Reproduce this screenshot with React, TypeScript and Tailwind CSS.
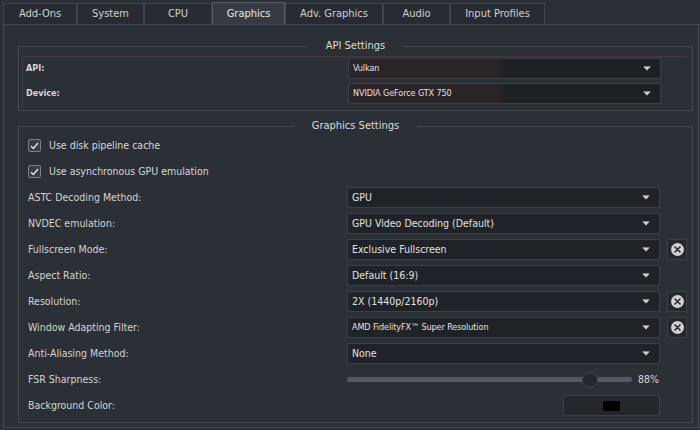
import React from "react";

const tabs = [
  { name: "Add-Ons", w: "w-[74px]" },
  { name: "System", w: "w-[67px]" },
  { name: "CPU", w: "w-[68px]" },
  { name: "Graphics", w: "w-[73px]", active: true },
  { name: "Adv. Graphics", w: "w-[98px]" },
  { name: "Audio", w: "w-[67px]" },
  { name: "Input Profiles", w: "w-[95px]" },
];

function Arrow() {
  return (
    <svg width="8" height="5" viewBox="0 0 8 5" className="shrink-0">
      <path d="M0.8 0.8 L7.2 0.8 L4 4.2 Z" fill="#d0d0d0" stroke="#d0d0d0" strokeWidth="0.6" strokeLinejoin="round" />
    </svg>
  );
}

function Combo({ value, small, tinted }: { value: string; small?: boolean; tinted?: boolean }) {
  return (
    <div
      className={
        "w-[313px] h-[21px] flex items-center justify-between pl-[4px] pr-[9px] border border-[#3b4047] " +
        (tinted
          ? "bg-[linear-gradient(to_right,#2b2428_0%,#2a2428_48%,#1e2124_50%,#1e2124_100%)]"
          : "bg-[#1f2226]")
      }
    >
      <span
        className={
          "text-[#e2e2e2] whitespace-nowrap " + (small ? "text-[9px] tracking-[-0.1px]" : "text-[10.5px]")
        }
      >
        {value}
      </span>
      <Arrow />
    </div>
  );
}

function ClearBtn() {
  return (
    <div className="w-[20px] h-[21px] ml-[7px] flex items-center justify-center bg-[#24272b] border border-[#3b3f46]">
      <div className="w-[13px] h-[13px] rounded-full bg-[#d2d2d2] flex items-center justify-center">
        <svg width="7" height="7" viewBox="0 0 7 7">
          <path d="M1 1 L6 6 M6 1 L1 6" stroke="#2a2d31" strokeWidth="1.7" strokeLinecap="round" />
        </svg>
      </div>
    </div>
  );
}

function Row({ label, children }: { label: string; children: React.ReactNode }) {
  return (
    <div className="flex items-center h-[21px]">
      <div className="w-[319px] text-[10.5px] text-[#d4d4d4] whitespace-nowrap">{label}</div>
      {children}
    </div>
  );
}

function Check({ label }: { label: string }) {
  return (
    <div className="flex items-center h-[21px]">
      <div className="w-[13px] h-[13px] rounded-[2px] border border-[#7c8087] bg-[#3a3e45] flex items-center justify-center">
        <svg width="9" height="8" viewBox="0 0 9 8">
          <path d="M1 4.2 L3.4 6.5 L8 1" stroke="#e4e4e4" strokeWidth="1.4" fill="none" />
        </svg>
      </div>
      <span className="ml-[8px] text-[10.5px] text-[#d8d8d8] whitespace-nowrap">{label}</span>
    </div>
  );
}

function Group({ title, children, className }: { title: string; children: React.ReactNode; className?: string }) {
  return (
    <div className={"relative w-[675px] border border-[#454a52] " + (className ?? "")}>
      <div className="absolute -top-[8px] left-0 right-0 flex justify-center">
        <span className="bg-[#2b2f36] px-[18px] text-[11px] leading-[14px] text-[#dcdcdc]">{title}</span>
      </div>
      {children}
    </div>
  );
}

export default function App() {
  return (
    <div className="w-[700px] h-[430px] overflow-hidden bg-[#2b2f36] font-['DejaVu_Sans_Condensed','DejaVu_Sans',sans-serif] text-[#d6d6d6]">
      {/* Tabs */}
      <div className="flex pl-[3px] pt-[3px] h-[24px] items-end">
        {tabs.map((t) => (
          <div
            key={t.name}
            className={
              "flex items-center justify-center pt-px text-[11px] border-l border-r border-t " +
              t.w +
              " " +
              (t.active
                ? "bg-[#363b43] border-[#565b63] text-[#e6e6e6] h-[22px]"
                : "bg-[#282b31] border-[#40454c] text-[#d0d0d0] h-[21px]")
            }
          >
            {t.name}
          </div>
        ))}
      </div>
      {/* Frame */}
      <div className="ml-[3px] w-[696px] h-[404px] border border-[#454a52] pl-[14px] bg-[#2b2f36]">
        <Group title="API Settings" className="mt-[21px] pl-[3px] pt-[9px] pb-[3px] h-[65px]">
          <div className="w-[665px] border-l border-t border-[#453a40] pl-[3px] pt-px flex flex-col gap-[4px] h-[50px]">
            <div className="flex items-center h-[21px]">
              <div className="w-[322px] text-[9px] font-bold text-[#d6d6d6]">API:</div>
              <Combo value="Vulkan" small tinted />
            </div>
            <div className="flex items-center h-[21px]">
              <div className="w-[322px] text-[9px] font-bold text-[#d6d6d6]">Device:</div>
              <Combo value="NVIDIA GeForce GTX 750" small tinted />
            </div>
          </div>
        </Group>
        <Group title="Graphics Settings" className="mt-[15px] pl-[9px] pt-[8px] h-[297px]">
          <div className="flex flex-col gap-[5px]">
            <Check label="Use disk pipeline cache" />
            <Check label="Use asynchronous GPU emulation" />
            <Row label="ASTC Decoding Method:">
              <Combo value="GPU" />
            </Row>
            <Row label="NVDEC emulation:">
              <Combo value="GPU Video Decoding (Default)" />
            </Row>
            <Row label="Fullscreen Mode:">
              <Combo value="Exclusive Fullscreen" />
              <ClearBtn />
            </Row>
            <Row label="Aspect Ratio:">
              <Combo value="Default (16:9)" />
            </Row>
            <Row label="Resolution:">
              <Combo value="2X (1440p/2160p)" />
              <ClearBtn />
            </Row>
            <Row label="Window Adapting Filter:">
              <Combo value="AMD FidelityFX™ Super Resolution" small />
              <ClearBtn />
            </Row>
            <Row label="Anti-Aliasing Method:">
              <Combo value="None" />
            </Row>
            <Row label="FSR Sharpness:">
              <div className="w-[285px] h-[5px] rounded-full bg-[#555a61] relative">
                <div className="absolute top-1/2 -translate-y-1/2 left-[235px] w-[16px] h-[16px] rounded-full bg-[#24272b] border border-[#41464d]" />
              </div>
              <span className="ml-[6px] text-[10.5px] text-[#d8d8d8]">88%</span>
            </Row>
            <Row label="Background Color:">
              <div className="ml-[216px] w-[97px] h-[21px] bg-[#23262a] border border-[#3a3f45] flex items-center justify-center">
                <div className="w-[17px] h-[10px] rounded-[2px] bg-black" />
              </div>
            </Row>
          </div>
        </Group>
      </div>
    </div>
  );
}
